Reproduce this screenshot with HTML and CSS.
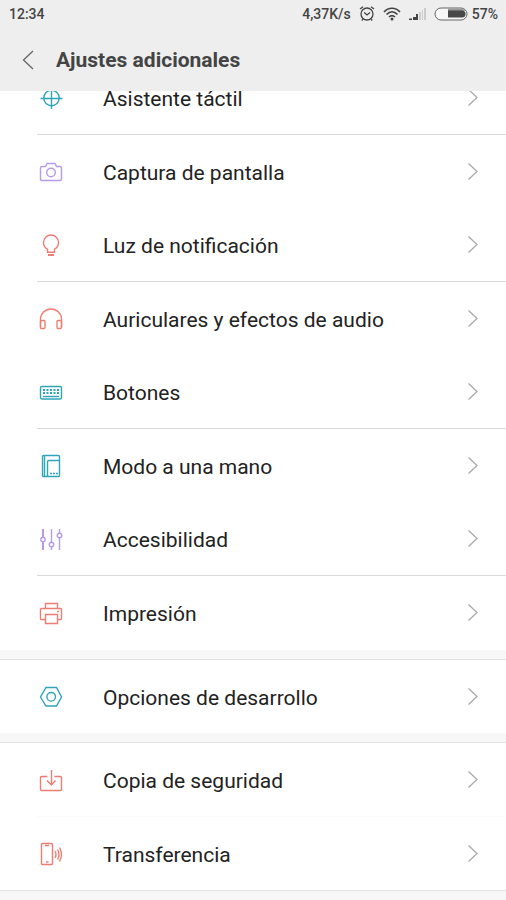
FILE: index.html
```
<!DOCTYPE html>
<html lang="es">
<head>
<meta charset="utf-8">
<meta name="viewport" content="width=device-width, initial-scale=1">
<title>Ajustes adicionales</title>
<link rel="stylesheet" href="styles.css">
</head>
<body>
<svg class="defs" aria-hidden="true">
  <symbol id="chevron" viewBox="0 0 12 19"><path d="M1.500 1.500 10 9.500 1.500 17.500"/></symbol>
</svg>
<header class="top">
  <div class="status">
    <span>12:34</span>
    <div class="indicators">
      <span>4,37K/s</span>
      <svg class="alarm" viewBox="0 0 16 16"><circle cx="8" cy="8" r="6"/><path d="M5.200 6.500 8 9 11 6.500M1 3 4 .8M15 3 12 .8M4 13 2.800 14.500M12 13 13.200 14.500"/></svg>
      <svg class="wifi" viewBox="0 0 18 14"><path d="M1 5C5.500 0 12.500 0 17 5M3.500 7.500C7 3.800 11 3.800 14.500 7.500M6 10Q9 7.200 12 10"/><circle cx="9" cy="12" r="1.500"/></svg>
      <svg class="signal" viewBox="0 0 17 12"><path class="on" d="M0 12v-1.500h3V12zM4 12V9h3v3zM7 12V6h2v6z"/><path class="off" d="M10 12V4h2v8zM13 12V2h1v10zM15 12V0h2v12z"/></svg>
      <svg class="battery" viewBox="0 0 34 14"><rect class="shell" x="1" y="1" width="32" height="12" rx="6"/><path class="shade" d="M14 1.500h13a5.500 5.500 0 0 1 4.500 2.500H14z"/><path class="charge" d="M14 3.500h14a3.500 3.500 0 0 1 0 7H14z"/></svg>
      <span>57%</span>
    </div>
  </div>
  <div class="titlebar">
    <button class="back" type="button" aria-label="Atrás"><svg viewBox="0 0 12 20"><path d="M11 1 1.500 10 11 19"/></svg></button>
    <h1>Ajustes adicionales</h1>
  </div>
</header>
<main class="content">
  <ul class="group scrolled">
    <li><a class="row" href="#"><svg class="icon teal" viewBox="0 0 25 25"><circle cx="12.500" cy="13" r="7.700"/><path d="M1.500 13.500h22M12.500 2v22"/></svg><span>Asistente táctil</span><svg class="chevron"><use href="#chevron"/></svg></a></li>
    <li class="divided"><a class="row" href="#"><svg class="icon purple" viewBox="0 0 25 25"><path d="M3 7.500h3.500L8 4.500h8l1.500 3H21q1.500 0 1.500 1.500v11q0 1.500-1.500 1.500H3q-1.500 0-1.500-1.500V9Q1.500 7.500 3 7.500z"/><circle cx="12" cy="13.500" r="4.300"/></svg><span>Captura de pantalla</span><svg class="chevron"><use href="#chevron"/></svg></a></li>
    <li><a class="row" href="#"><svg class="icon red" viewBox="0 0 25 25"><path d="M8.500 20.200v-3C5.500 15.500 4.500 13 4.500 10.500a7.500 7.500 0 0 1 15 0c0 2.500-1 5-4 6.700v3z"/><path class="heavy" d="M9 23h6"/></svg><span>Luz de notificación</span><svg class="chevron"><use href="#chevron"/></svg></a></li>
    <li class="divided"><a class="row" href="#"><svg class="icon red" viewBox="0 0 25 25"><path d="M1.500 21V13a10.500 10 0 0 1 21 0v8"/><rect x="1.500" y="14.500" width="4.500" height="8" rx="1"/><rect x="18" y="14.500" width="4.500" height="8" rx="1"/></svg><span>Auriculares y efectos de audio</span><svg class="chevron"><use href="#chevron"/></svg></a></li>
    <li><a class="row" href="#"><svg class="icon teal" viewBox="0 0 25 25"><rect x="1.500" y="7.500" width="21" height="12.500" rx="1.500"/><path class="heavy" d="M4 11h2m1.500 0h2m1.500 0h2m1.500 0h2m1.500 0h2M4 14h2m1.500 0h2m1.500 0h2m1.500 0h2m1.500 0h2"/><path d="M4 17.500h16"/></svg><span>Botones</span><svg class="chevron"><use href="#chevron"/></svg></a></li>
    <li class="divided"><a class="row" href="#"><svg class="icon teal" viewBox="0 0 25 25"><rect x="3.500" y="2.500" width="17" height="21" rx="1"/><path d="M8.500 23V9Q8.500 7.500 10 7.500h10.500M5.500 3v20"/><path d="M11 20.500h2m1 0h2m1 0h2"/></svg><span>Modo a una mano</span><svg class="chevron"><use href="#chevron"/></svg></a></li>
    <li><a class="row" href="#"><svg class="icon purple" viewBox="0 0 25 25"><path class="heavy" d="M4 3v8M4 16v8"/><path d="M12.500 3v13M12.500 21v3M20.500 3v4M20.500 12v12"/><circle cx="4" cy="13.500" r="2.200"/><circle cx="12.500" cy="18.500" r="2.200"/><circle cx="20.500" cy="9.500" r="2.200"/></svg><span>Accesibilidad</span><svg class="chevron"><use href="#chevron"/></svg></a></li>
    <li class="divided"><a class="row" href="#"><svg class="icon red" viewBox="0 0 25 25"><path d="M6.500 8.500v-5h12v5M6.500 19.500h-4q-1 0-1-1v-9q0-1 1-1h19q1 0 1 1v9q0 1-1 1h-3M6.500 14.500h12v9h-12zM18 11.500h2"/></svg><span>Impresión</span><svg class="chevron"><use href="#chevron"/></svg></a></li>
  </ul>
  <ul class="group">
    <li><a class="row" href="#"><svg class="icon teal" viewBox="0 0 25 25"><path d="M7 3.500h10.500l5 9.500-5 9H7L1.500 13z"/><circle cx="12.200" cy="12.800" r="4.300"/></svg><span>Opciones de desarrollo</span><svg class="chevron"><use href="#chevron"/></svg></a></li>
  </ul>
  <ul class="group">
    <li><a class="row" href="#"><svg class="icon red" viewBox="0 0 25 25"><path d="M8.500 9.500h-6q-1 0-1 1v12q0 1 1 1h19q1 0 1-1v-12q0-1-1-1h-6M12.500 3v14.500M8 13.500l4.500 4.500 4-4.500"/></svg><span>Copia de seguridad</span><svg class="chevron"><use href="#chevron"/></svg></a></li>
    <li class="divided faint"><a class="row" href="#"><svg class="icon red" viewBox="0 0 25 25"><rect x="2.500" y="2.500" width="11" height="21" rx="1"/><path d="M6 4.500h4M7 21h2.500M16 10q2 3.500 0 7M18.500 8.500q3 5 0 10M20.500 6.500q4 7 0 14"/></svg><span>Transferencia</span><svg class="chevron"><use href="#chevron"/></svg></a></li>
  </ul>
</main>
</body>
</html>
```
FILE: styles.css
```
* {
  box-sizing: border-box;
}

body {
  margin: 0;
  height: 100vh;
  display: flex;
  flex-direction: column;
  overflow: hidden;
  background: #f7f7f7;
  color: #222;
  font-family: Roboto, "Liberation Sans", sans-serif;
}

svg {
  display: block;
  flex: none;
  fill: none;
  stroke: currentColor;
}

.defs {
  display: none;
}

.top {
  flex: none;
  background: #eee;
  color: #444;
}

.status {
  display: flex;
  justify-content: space-between;
  align-items: center;
  height: 28px;
  padding: 0 8px 0 9px;
  font-size: 14px;
  font-weight: 500;
}

.indicators {
  display: flex;
  align-items: center;
  gap: 8px;
}

.indicators .battery {
  margin-right: -4px;
}

.alarm {
  width: 16px;
  height: 16px;
  stroke-width: 1.3;
}

.wifi {
  width: 18px;
  height: 14px;
  stroke-width: 1.7;
}

.wifi circle,
.signal .on {
  fill: currentColor;
  stroke: none;
}

.signal {
  width: 17px;
  height: 12px;
}

.signal .off {
  fill: #ccc;
  stroke: none;
}

.battery {
  width: 34px;
  height: 14px;
}

.battery .shell {
  fill: #f7f7f7;
  stroke: #666;
}

.battery .shade {
  fill: #999;
  stroke: none;
}

.battery .charge {
  fill: #484848;
  stroke: none;
}

.titlebar {
  display: flex;
  align-items: center;
  gap: 12px;
  height: 63px;
  padding: 0 12px;
}

.back {
  display: grid;
  place-items: center;
  width: 32px;
  height: 40px;
  padding: 0;
  border: 0;
  background: none;
  color: #666;
}

.back svg {
  width: 12px;
  height: 20px;
  stroke-width: 1.3;
}

h1 {
  margin: 0;
  font-size: 21px;
  font-weight: 700;
  line-height: 28px;
}

.content {
  flex: 1;
  min-height: 0;
  overflow: hidden;
}

.group {
  margin: 0 0 9px;
  padding: 0;
  list-style: none;
  background: #fff;
  border-top: 1px solid #e2e2e2;
}

.scrolled {
  margin-top: -31px;
  padding-bottom: 1px;
}

.group:last-child {
  border-bottom: 1px solid #e2e2e2;
}

.divided::before {
  content: "";
  display: block;
  height: 1px;
  margin-left: 37px;
  background: #d9d9d9;
}

.faint::before {
  background: #fbfbfb;
}

.row {
  display: flex;
  align-items: center;
  height: 73px;
  padding: 0 27px 0 39px;
  color: inherit;
  font-size: 21px;
  line-height: 28px;
  text-decoration: none;
}

.row span {
  flex: 1;
  padding: 2px 0 0 39px;
}

.icon {
  width: 25px;
  height: 25px;
  stroke-width: 1.4;
}

.heavy {
  stroke-width: 2;
}

.teal {
  color: #2fa5b8;
}

.purple {
  color: #b79be8;
}

.red {
  color: #ee7e74;
}

.chevron {
  width: 12px;
  height: 19px;
  color: #aaa;
  stroke-width: 1.3;
}
```
